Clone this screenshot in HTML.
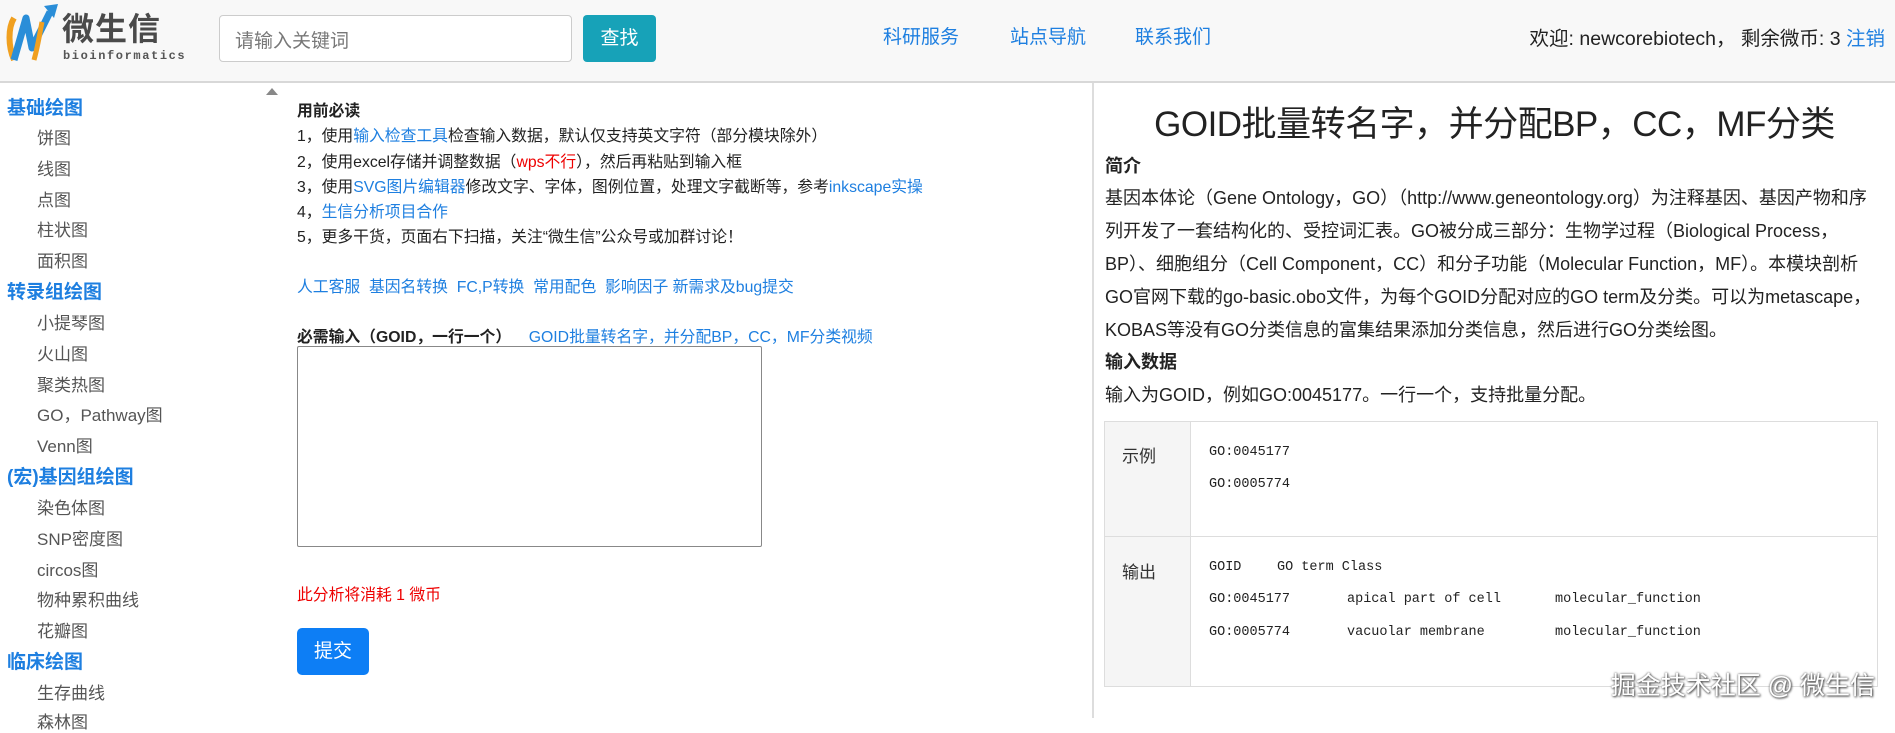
<!DOCTYPE html>
<html><head><meta charset="utf-8"><style>
*{margin:0;padding:0;box-sizing:border-box}
body{width:1895px;height:718px;overflow:hidden;background:#fff;font-family:"Liberation Sans","Noto Sans CJK SC",sans-serif;color:#222;position:relative}
.a{position:absolute;white-space:nowrap}
.hdr{position:absolute;left:0;top:0;width:1895px;height:83px;background:#f8f8f8;border-bottom:2px solid #d8d8d8}
.nav{color:#1e7fe0;font-size:19px;top:22px}
.side h{position:absolute;left:7px;font-size:19px;font-weight:bold;color:#1e7fe0}
.side i{position:absolute;left:37px;font-style:normal;font-size:17px;color:#555}
.m{font-size:15.8px;color:#222;left:297px}
.m b{font-weight:bold}
.bl{color:#1e7fe0}
.r{left:1105px;font-size:18px;color:#222}
.mono{font-family:"Liberation Mono","Noto Sans CJK SC",monospace;font-size:13.5px;color:#222}
</style></head><body>
<div class="hdr"></div>
<svg class="a" style="left:4px;top:2px" width="56" height="64" viewBox="0 0 56 64">
<path d="M10 16 C4 26 4 44 10 58" stroke="#f0a020" stroke-width="6" fill="none"/>
<path d="M10 58 L22 16 L28 46 L46 10" stroke="#2a8ed8" stroke-width="7" fill="none" stroke-linejoin="round"/>
<path d="M30 58 C34 44 36 30 38 20" stroke="#f0a020" stroke-width="5" fill="none"/>
<polygon points="40,4 54,2 50,16" fill="#2a8ed8"/>
</svg>
<div class="a" style="left:62px;top:4px;font-size:32px;font-weight:bold;color:#4a4a4a;letter-spacing:1px">微生信</div>
<div class="a" style="left:63px;top:49px;font-size:12px;font-weight:bold;color:#555;letter-spacing:1.6px;font-family:'Liberation Mono',monospace">bioinformatics</div>
<div class="a" style="left:219px;top:15px;width:353px;height:47px;background:#fff;border:1px solid #ccc;border-radius:4px"></div>
<div class="a" style="left:235px;top:26px;font-size:19px;color:#777">请输入关键词</div>
<div class="a" style="left:583px;top:15px;width:73px;height:47px;background:#17a2b8;border-radius:4px;color:#fff;font-size:19px;text-align:center;line-height:47px">查找</div>
<div class="a nav" style="left:883px">科研服务</div>
<div class="a nav" style="left:1010px">站点导航</div>
<div class="a nav" style="left:1135px">联系我们</div>
<div class="a" style="right:10px;top:22px;font-size:19.5px;color:#222">欢迎: newcorebiotech， 剩余微币: 3 <span class="bl">注销</span></div>

<div class="side">
<h style="top:93px">基础绘图</h>
<i style="top:124px">饼图</i><i style="top:155px">线图</i><i style="top:186px">点图</i><i style="top:216px">柱状图</i><i style="top:247px">面积图</i>
<h style="top:277px">转录组绘图</h>
<i style="top:309px">小提琴图</i><i style="top:340px">火山图</i><i style="top:371px">聚类热图</i><i style="top:401px">GO，Pathway图</i><i style="top:432px">Venn图</i>
<h style="top:462px">(宏)基因组绘图</h>
<i style="top:494px">染色体图</i><i style="top:525px">SNP密度图</i><i style="top:556px">circos图</i><i style="top:586px">物种累积曲线</i><i style="top:617px">花瓣图</i>
<h style="top:647px">临床绘图</h>
<i style="top:679px">生存曲线</i><i style="top:708px">森林图</i>
</div>
<div class="a" style="left:266px;top:88px;width:0;height:0;border-left:6px solid transparent;border-right:6px solid transparent;border-bottom:7px solid #888"></div>

<div class="a m" style="top:98px"><b>用前必读</b></div>
<div class="a m" style="top:123px">1，使用<span class="bl">输入检查工具</span>检查输入数据，默认仅支持英文字符（部分模块除外）</div>
<div class="a m" style="top:149px">2，使用excel存储并调整数据（<span style="color:#e00">wps不行</span>），然后再粘贴到输入框</div>
<div class="a m" style="top:174px">3，使用<span class="bl">SVG图片编辑器</span>修改文字、字体，图例位置，处理文字截断等，参考<span class="bl">inkscape实操</span></div>
<div class="a m" style="top:199px">4，<span class="bl">生信分析项目合作</span></div>
<div class="a m" style="top:224px">5，更多干货，页面右下扫描，关注“微生信”公众号或加群讨论！</div>
<div class="a m bl" style="top:274px">人工客服&nbsp; 基因名转换&nbsp; FC,P转换&nbsp; 常用配色&nbsp; 影响因子 新需求及bug提交</div>
<div class="a m" style="top:324px"><b>必需输入（GOID，一行一个）</b> &nbsp;&nbsp; <span class="bl">GOID批量转名字，并分配BP，CC，MF分类视频</span></div>
<div class="a" style="left:297px;top:346px;width:465px;height:201px;border:1px solid #888;border-radius:2px"></div>
<div class="a m" style="top:582px;color:#e00">此分析将消耗 1 微币</div>
<div class="a" style="left:297px;top:628px;width:72px;height:47px;background:#0d7ef5;border-radius:5px;color:#fff;font-size:19px;text-align:center;line-height:47px">提交</div>

<div class="a" style="left:1092px;top:83px;width:2px;height:635px;background:#ddd"></div>
<div class="a" style="left:1094px;top:96px;width:801px;text-align:center;font-size:35px;color:#222;letter-spacing:-0.5px">GOID批量转名字，并分配BP，CC，MF分类</div>
<div class="a r" style="top:152px;font-weight:bold">简介</div>
<div class="a r" style="top:184px">基因本体论（Gene Ontology，GO）（http://www.geneontology.org）为注释基因、基因产物和序</div>
<div class="a r" style="top:217px">列开发了一套结构化的、受控词汇表。GO被分成三部分：生物学过程（Biological Process，</div>
<div class="a r" style="top:250px">BP）、细胞组分（Cell Component，CC）和分子功能（Molecular Function，MF）。本模块剖析</div>
<div class="a r" style="top:283px">GO官网下载的go-basic.obo文件，为每个GOID分配对应的GO term及分类。可以为metascape，</div>
<div class="a r" style="top:316px">KOBAS等没有GO分类信息的富集结果添加分类信息，然后进行GO分类绘图。</div>
<div class="a r" style="top:348px;font-weight:bold">输入数据</div>
<div class="a r" style="top:381px">输入为GOID，例如GO:0045177。一行一个，支持批量分配。</div>

<div class="a" style="left:1104px;top:421px;width:774px;height:266px;border:1px solid #ddd"></div>
<div class="a" style="left:1105px;top:422px;width:86px;height:264px;background:#f5f5f5;border-right:1px solid #ddd"></div>
<div class="a" style="left:1105px;top:536px;width:772px;height:1px;background:#ddd"></div>
<div class="a" style="left:1122px;top:442px;font-size:17px;color:#333">示例</div>
<div class="a" style="left:1122px;top:558px;font-size:17px;color:#333">输出</div>
<div class="a mono" style="left:1209px;top:445px">GO:0045177</div>
<div class="a mono" style="left:1209px;top:477px">GO:0005774</div>
<div class="a mono" style="left:1209px;top:560px">GOID</div><div class="a mono" style="left:1277px;top:560px">GO term Class</div>
<div class="a mono" style="left:1209px;top:592px">GO:0045177</div><div class="a mono" style="left:1347px;top:592px">apical part of cell</div><div class="a mono" style="left:1555px;top:592px">molecular_function</div>
<div class="a mono" style="left:1209px;top:625px">GO:0005774</div><div class="a mono" style="left:1347px;top:625px">vacuolar membrane</div><div class="a mono" style="left:1555px;top:625px">molecular_function</div>
<div class="a" style="right:20px;top:666px;font-size:25px;color:#fff;text-shadow:0 0 2px #555,1px 1px 2px #444">掘金技术社区 @ 微生信</div>
</body></html>
